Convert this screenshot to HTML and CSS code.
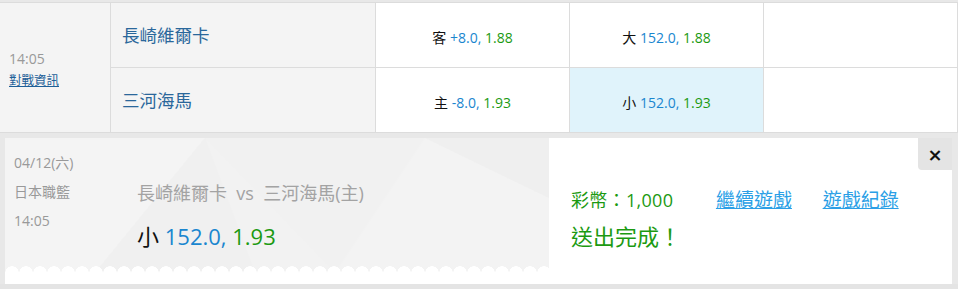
FILE: index.html
```html
<!DOCTYPE html>
<html lang="zh-Hant">
<head>
    <meta charset="UTF-8">
    <title>投注單</title>
    <link rel="stylesheet" href="styles.css">
</head>
<body>
    <div class="board">
        <div class="match">
            <div class="cell time-cell">
                <div class="start">14:05</div>
                <a class="info-link" href="#">對戰資訊</a>
            </div>
            <div class="cell team">長崎維爾卡</div>
            <div class="cell odds"><span><span class="tag">客</span> <span class="line">+8.0,</span> <span class="rate">1.88</span></span></div>
            <div class="cell odds"><span><span class="tag">大</span> <span class="line">152.0,</span> <span class="rate">1.88</span></span></div>
            <div class="cell"></div>
            <div class="cell team">三河海馬</div>
            <div class="cell odds"><span><span class="tag">主</span> <span class="line">-8.0,</span> <span class="rate">1.93</span></span></div>
            <div class="cell odds picked"><span><span class="tag">小</span> <span class="line">152.0,</span> <span class="rate">1.93</span></span></div>
            <div class="cell"></div>
        </div>

        <div class="slip">
            <div class="ticket">
                <div class="meta">
                    <div>04/12(六)</div>
                    <div>日本職籃</div>
                    <div>14:05</div>
                </div>
                <div class="bet">
                    <div class="teams">長崎維爾卡&nbsp;&nbsp;vs&nbsp;&nbsp;三河海馬(主)</div>
                    <div class="pick"><span class="tag">小</span> <span class="line">152.0,</span> <span class="rate">1.93</span></div>
                </div>
            </div>
            <div class="result">
                <div class="result-top">
                    <span class="coins">彩幣：1,000</span>
                    <a class="go-link first" href="#">繼續遊戲</a>
                    <a class="go-link" href="#">遊戲紀錄</a>
                </div>
                <div class="done">送出完成！</div>
            </div>
            <button class="close">×</button>
        </div>
    </div>
</body>
</html>
```

FILE: styles.css
```css
body { margin: 0; font-family: "Open Sans", "Noto Sans CJK TC", sans-serif; background: #e4e4e4; }
.board { width: 958px; padding-top: 2px; background: #e8e8e8; }

.match { display: grid; grid-template-columns: 111px 265px 194px 194px 194px; grid-template-rows: 65px 65px; border-top: 1px solid #dcdcdc; background: #fff; }
.cell { box-sizing: border-box; border-right: 1px solid #dcdcdc; border-bottom: 1px solid #dcdcdc; }
.time-cell { grid-row: span 2; background: #f4f4f4; display: flex; flex-direction: column; justify-content: center; padding: 2px 0 0 9px; }
.start { font-size: 14px; color: #999; line-height: 24px; }
.info-link { font-size: 12.5px; color: #1d5f98; line-height: 20px; }
.team { background: #f4f4f4; color: #2a679b; font-size: 17.5px; display: flex; align-items: center; padding: 0 0 2px 11px; }
.odds { display: flex; align-items: center; justify-content: center; font-size: 14px; padding-top: 4px; }
.odds.picked { background: #e0f3fb; }
.tag { color: #111; }
.line { color: #1a86cf; }
.rate { color: #1c9a12; }

.slip { position: relative; display: flex; height: 146px; margin: 5px 6px 5px 5px; background: #fff; }
.ticket { display: flex; width: 544px; height: 135px; background-color: #f2f2f2;
    background-image:
        radial-gradient(circle at 7px 10px, #fff 6.5px, transparent 7px),
        url("data:image/svg+xml,%3Csvg xmlns='http://www.w3.org/2000/svg' width='544' height='135'%3E%3Cpolygon points='0,0 200,0 90,135 0,135' fill='%23f4f4f4'/%3E%3Cpolygon points='200,0 420,0 330,135' fill='%23f1f1f1'/%3E%3Cpolygon points='330,135 420,0 544,60 544,135' fill='%23f3f3f3'/%3E%3Cpolygon points='420,0 544,0 544,60' fill='%23efefef'/%3E%3Cpolygon points='90,135 200,0 250,135' fill='%23f0f0f0'/%3E%3C/svg%3E");
    background-repeat: repeat-x, no-repeat;
    background-position: left bottom, left top;
    background-size: 14px 10px, auto;
}
.meta { box-sizing: border-box; width: 132px; padding: 10px 0 0 9px; font-size: 14px; line-height: 29px; color: #999; }
.bet { padding-top: 42px; }
.teams { font-size: 18px; line-height: 26px; color: #a3a3a3; }
.pick { margin-top: 15px; font-size: 22px; line-height: 30px; }

.result { margin-left: 22px; padding-top: 49px; }
.result-top { font-size: 18px; line-height: 26px; }
.coins { color: #1c9a12; letter-spacing: 0.3px; }
.go-link { font-size: 19px; color: #2b9fe6; margin-left: 26px; }
.go-link.first { margin-left: 38px; }
.done { margin-top: 8px; font-size: 22px; line-height: 30px; color: #1c9a12; }

.close { position: absolute; top: 0; right: 0; width: 34px; height: 32px; border: 0; padding: 0; background: #e4e4e4; border-bottom-left-radius: 4px; font-family: "DejaVu Sans", sans-serif; font-size: 18px; font-weight: bold; color: #111; }
```
